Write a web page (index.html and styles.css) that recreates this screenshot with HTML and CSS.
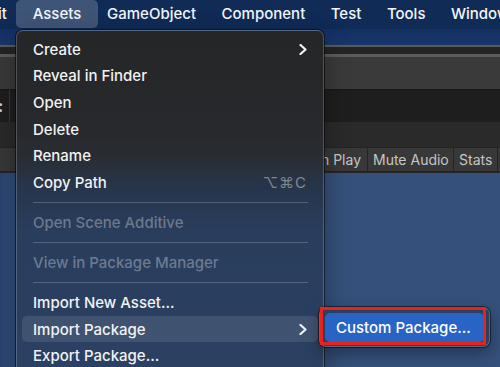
FILE: index.html
```html
<!DOCTYPE html>
<html lang="en">
<head>
    <meta charset="UTF-8">
    <meta name="viewport" content="width=device-width, initial-scale=1.0">
    <title>Assets Menu</title>
    <link rel="stylesheet" href="styles.css">
</head>
<body>

    <!-- Menu Bar -->
    <div class="menubar">
        <span class="mb-item mb-edit">Edit</span>
        <span class="mb-item active">Assets</span>
        <span class="mb-item">GameObject</span>
        <span class="mb-item">Component</span>
        <span class="mb-item">Test</span>
        <span class="mb-item">Tools</span>
        <span class="mb-item">Window</span>
    </div>

    <!-- Editor window behind the menu -->
    <div class="editor">
        <div class="strip"></div>
        <div class="title-bar"></div>
        <div class="tab-bar"></div>
        <div class="scene-toolbar">
            <span class="grip">:</span>
            <span class="divider"></span>
        </div>
        <div class="sub-bar"></div>
        <div class="game-toolbar">
            <span class="tool-btn display">Display 1</span>
            <span class="tool-btn maximize"><span>Maximize On Play</span></span>
            <span class="tool-btn mute">Mute Audio</span>
            <span class="tool-btn stats">Stats</span>
            <span class="tool-btn">Gizmos</span>
        </div>
        <div class="game-view"></div>
    </div>

    <!-- Assets dropdown -->
    <div class="menu">
        <div class="item">Create <svg class="chev" width="8" height="11" viewBox="0 0 8 11"><path d="M1.5 1 L6.5 5.5 L1.5 10" /></svg></div>
        <div class="item">Reveal in Finder</div>
        <div class="item">Open</div>
        <div class="item">Delete</div>
        <div class="item">Rename</div>
        <div class="item">Copy Path <span class="shortcut">⌥⌘C</span></div>
        <div class="sep"></div>
        <div class="item disabled">Open Scene Additive</div>
        <div class="sep"></div>
        <div class="item disabled">View in Package Manager</div>
        <div class="sep"></div>
        <div class="item">Import New Asset...</div>
        <div class="item hover">Import Package <svg class="chev" width="8" height="11" viewBox="0 0 8 11"><path d="M1.5 1 L6.5 5.5 L1.5 10" /></svg></div>
        <div class="item">Export Package...</div>
    </div>

    <!-- Import Package submenu -->
    <div class="submenu">
        <div class="item selected">Custom Package...</div>
    </div>

    <!-- Red callout -->
    <div class="callout"></div>

</body>
</html>
```

FILE: styles.css
```css
/* Global */
* {
    margin: 0;
    padding: 0;
    box-sizing: border-box;
}

body {
    width: 500px;
    height: 367px;
    overflow: hidden;
    display: flex;
    flex-direction: column;
    background: #35507a;
    font-family: 'Inter', 'Liberation Sans', 'DejaVu Sans', sans-serif;
    color: #f2f2f2;
}

/* Menu Bar */
.menubar {
    height: 29px;
    flex: 0 0 29px;
    display: flex;
    align-items: flex-start;
    background: #0f2b56;
    white-space: nowrap;
    overflow: hidden;
}

.mb-item {
    flex: 0 0 auto;
    height: 28px;
    line-height: 28px;
    padding: 0 12.75px;
    font-size: 15px;
    font-weight: 500;
    color: #f4f6fa;
}

.mb-edit {
    margin-left: -33px;
}

.mb-item.active {
    padding: 0 17px;
    margin: 0 -4px;
    background: rgba(255, 255, 255, 0.2);
    border-radius: 5px;
}

/* Editor background */
.editor {
    flex: 1;
    display: flex;
    flex-direction: column;
}

.strip {
    height: 16px;
    background: linear-gradient(180deg, #133062, #17366a);
}

.title-bar {
    height: 12px;
    background: #242424;
    border-top: 2px solid #5a5a5a;
    border-bottom: 3px solid #5c5c5c;
}

.tab-bar {
    height: 33px;
    background: #3a3a3a;
    border-bottom: 1px solid #171717;
}

.scene-toolbar {
    height: 32px;
    display: flex;
    align-items: center;
    background: #1e1e1e;
}

.grip {
    width: 11px;
    margin-left: -2px;
    color: #d0d0d0;
    font-size: 16px;
    font-weight: bold;
}

.divider {
    width: 1px;
    height: 100%;
    background: #3a3a3a;
}

.sub-bar {
    height: 25px;
    background: #2a2a2a;
}

.game-toolbar {
    height: 26px;
    display: flex;
    background: #262626;
    white-space: nowrap;
    overflow: hidden;
}

.tool-btn {
    flex: 0 0 auto;
    height: 25px;
    line-height: 24px;
    padding: 0 5px;
    font-size: 14px;
    color: #c6c6c6;
    background: #383838;
    border: 1px solid #242424;
    border-left: none;
    text-align: center;
    overflow: hidden;
}

.tool-btn.display {
    width: 250px;
}

.tool-btn.maximize {
    width: 118px;
    display: flex;
    justify-content: flex-end;
    padding-right: 6px;
}

.tool-btn.maximize span {
    flex: 0 0 auto;
}

.tool-btn.mute {
    width: 86px;
}

.tool-btn.stats {
    width: 44px;
}

.game-view {
    flex: 1;
    background: linear-gradient(90deg, #2a4470 0, #33507c 16px, #35507a 40px);
}

/* Dropdown Menu */
.menu {
    position: absolute;
    left: 16px;
    top: 30px;
    width: 308px;
    height: 360px;
    padding: 5px;
    border: 1px solid rgba(255, 255, 255, 0.2);
    border-radius: 7px;
    background: linear-gradient(180deg, #252628 0, #27292c 100px, #292d33 125px, #27364e 160px, #293d5c 200px, #2b4163 337px);
    box-shadow: 0 0 0 1px rgba(0, 0, 0, 0.55), 0 8px 24px rgba(0, 0, 0, 0.35);
}

.item {
    height: 26.6px;
    display: flex;
    align-items: center;
    justify-content: space-between;
    padding: 0 11px;
    border-radius: 5px;
    font-size: 15px;
    font-weight: 500;
    color: #f2f2f2;
    white-space: nowrap;
}

.item.disabled {
    color: rgba(255, 255, 255, 0.32);
}

.item.hover {
    background: rgba(255, 255, 255, 0.1);
}

.shortcut {
    color: rgba(255, 255, 255, 0.42);
    font-weight: 400;
    letter-spacing: 1px;
}

.chev path {
    fill: none;
    stroke: #f2f2f2;
    stroke-width: 2.2;
    stroke-linecap: round;
    stroke-linejoin: round;
}

.sep {
    height: 13.5px;
    display: flex;
    align-items: center;
    margin: 0 10px 0 10.5px;
}

.sep::after {
    content: "";
    flex: 1;
    height: 1px;
    background: rgba(255, 255, 255, 0.2);
}

/* Submenu */
.submenu {
    position: absolute;
    left: 319px;
    top: 307px;
    width: 171px;
    height: 40px;
    padding: 5px 5px 4px 5px;
    border: 1px solid rgba(255, 255, 255, 0.22);
    border-radius: 7px;
    background: #2b3f5e;
    box-shadow: 0 0 0 1px rgba(0, 0, 0, 0.5), 0 6px 16px rgba(0, 0, 0, 0.35);
}

.submenu .item {
    height: 29px;
}

.item.selected {
    background: #2764c5;
    color: #ffffff;
}

/* Red highlight box */
.callout {
    position: absolute;
    left: 320px;
    top: 307px;
    width: 166px;
    height: 38px;
    border: 3px solid #e8231c;
}
```
